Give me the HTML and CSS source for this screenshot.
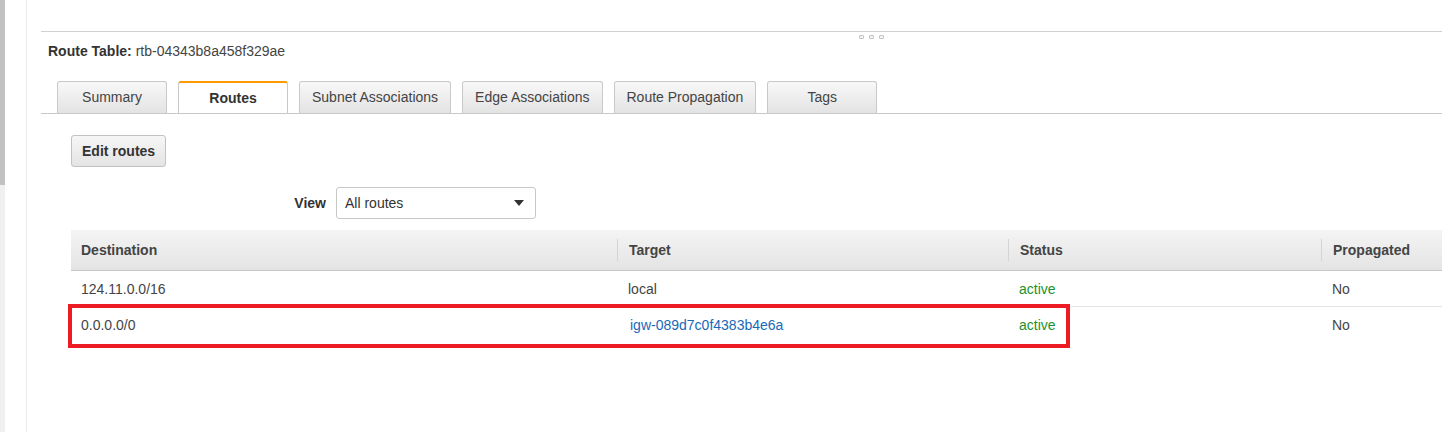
FILE: index.html
```html
<!DOCTYPE html>
<html>
<head>
<meta charset="utf-8">
<link rel="stylesheet" href="styles.css">
</head>
<body>
<div class="app">
  <div class="scrollbar"><div class="thumb"></div></div>
  <div class="gutter"></div>
  <main class="main">
    <section class="panel">
      <div class="handle"><span></span><span></span><span></span></div>
      <div class="title"><b>Route Table:</b> rtb-04343b8a458f329ae</div>
      <nav class="tabs">
        <div class="tab">Summary</div>
        <div class="tab active">Routes</div>
        <div class="tab">Subnet Associations</div>
        <div class="tab">Edge Associations</div>
        <div class="tab">Route Propagation</div>
        <div class="tab">Tags</div>
      </nav>
      <div class="content">
        <button class="btn">Edit routes</button>
        <div class="view-row">
          <label class="view-label">View</label>
          <div class="select"><span>All routes</span><span class="caret"></span></div>
        </div>
        <div class="table-wrap">
          <table class="routes">
            <colgroup>
              <col class="c1"><col class="c2"><col class="c3"><col class="c4">
            </colgroup>
            <thead>
              <tr>
                <th><div class="th-in first">Destination</div></th>
                <th><div class="th-in">Target</div></th>
                <th><div class="th-in">Status</div></th>
                <th><div class="th-in">Propagated</div></th>
              </tr>
            </thead>
            <tbody>
              <tr>
                <td class="first">124.11.0.0/16</td>
                <td>local</td>
                <td class="ok">active</td>
                <td>No</td>
              </tr>
              <tr>
                <td class="first">0.0.0.0/0</td>
                <td><a class="link">igw-089d7c0f4383b4e6a</a></td>
                <td class="ok">active</td>
                <td>No</td>
              </tr>
            </tbody>
          </table>
          <div class="highlight"></div>
        </div>
      </div>
    </section>
  </main>
</div>
</body>
</html>
```

FILE: styles.css
```css
html, body {
  margin: 0;
  padding: 0;
  background: #fff;
}
body {
  font-family: "Liberation Sans", Arial, sans-serif;
  font-size: 14px;
  color: #444;
  overflow: hidden;
  width: 1442px;
  height: 432px;
}
.app {
  display: flex;
  height: 432px;
}
.scrollbar {
  width: 5px;
  background: #f0f0f0;
  flex: none;
}
.thumb {
  height: 185px;
  background: #c1c1c1;
}
.gutter {
  width: 21px;
  border-right: 1px solid #ebebeb;
  flex: none;
}
.main {
  flex: 1;
  min-width: 0;
  padding: 31px 0 0 14px;
}
.panel {
  position: relative;
  border-top: 1px solid #d0d0d0;
}
.handle {
  position: absolute;
  left: 818px;
  top: 3px;
  display: flex;
  gap: 5px;
}
.handle span {
  width: 3px;
  height: 2px;
  border: 1px solid #c4c4c4;
  border-radius: 1px;
  background: #f4f4f4;
}
.title {
  padding: 11px 0 0 7px;
  line-height: 16px;
  color: #444;
}
.title b {
  color: #333;
}
.tabs {
  display: flex;
  gap: 11px;
  margin-top: 22px;
  padding-left: 16px;
  border-bottom: 1px solid #c8c8c8;
}
.tab {
  box-sizing: border-box;
  min-width: 110px;
  height: 32px;
  padding: 0 12px 2px;
  display: flex;
  align-items: center;
  justify-content: center;
  border: 1px solid #c9c9c9;
  border-bottom: none;
  border-radius: 3px 3px 0 0;
  background: linear-gradient(#f8f8f8, #e3e3e3);
  color: #444;
}
.tab.active {
  background: #fff;
  border-top: 2px solid #f90;
  font-weight: bold;
  color: #333;
  padding-top: 0;
  padding-bottom: 1px;
}
.content {
  padding-left: 30px;
}
.btn {
  display: block;
  margin-top: 21px;
  box-sizing: border-box;
  height: 32px;
  padding: 0 10px 1px;
  font-family: inherit;
  font-size: 14px;
  font-weight: bold;
  color: #333;
  border: 1px solid #c2c2c2;
  border-radius: 3px;
  background: linear-gradient(#f6f6f6, #e4e4e4);
}
.view-row {
  display: flex;
  align-items: center;
  margin-top: 20px;
}
.view-label {
  width: 255px;
  text-align: right;
  margin-right: 10px;
  font-weight: bold;
  color: #333;
}
.select {
  box-sizing: border-box;
  width: 200px;
  height: 32px;
  border: 1px solid #c8c8c8;
  border-radius: 3px;
  display: flex;
  align-items: center;
  justify-content: space-between;
  padding: 0 11px 0 8px;
  color: #333;
}
.caret {
  width: 0;
  height: 0;
  border-left: 5px solid transparent;
  border-right: 5px solid transparent;
  border-top: 6px solid #333;
}
.table-wrap {
  position: relative;
  margin-top: 11px;
}
.routes {
  border-collapse: collapse;
  table-layout: fixed;
  width: 100%;
}
.c1 { width: 546px; }
.c2 { width: 391px; }
.c3 { width: 313px; }
.routes th {
  height: 40px;
  padding: 0;
  text-align: left;
  background: linear-gradient(#f4f4f4, #e4e4e4);
  border-bottom: 1px solid #c8c8c8;
  font-weight: bold;
  color: #444;
}
.th-in {
  border-left: 1px solid #d4d4d4;
  padding-left: 11px;
  line-height: 22px;
}
.th-in.first {
  border-left: none;
  padding-left: 10px;
}
.routes td {
  height: 35px;
  padding: 0 0 0 11px;
  border-bottom: 1px solid #e3e3e3;
  color: #444;
}
.routes td.first {
  padding-left: 10px;
}
.routes td.ok {
  color: #1a922e;
}
.routes tbody tr:last-child td {
  border-bottom: none;
}
.link {
  color: #1a68b8;
  padding-left: 2px;
}
.highlight {
  position: absolute;
  left: -3px;
  top: 74px;
  width: 1002px;
  height: 44px;
  box-sizing: border-box;
  border: 4px solid #ed1c24;
}
```
